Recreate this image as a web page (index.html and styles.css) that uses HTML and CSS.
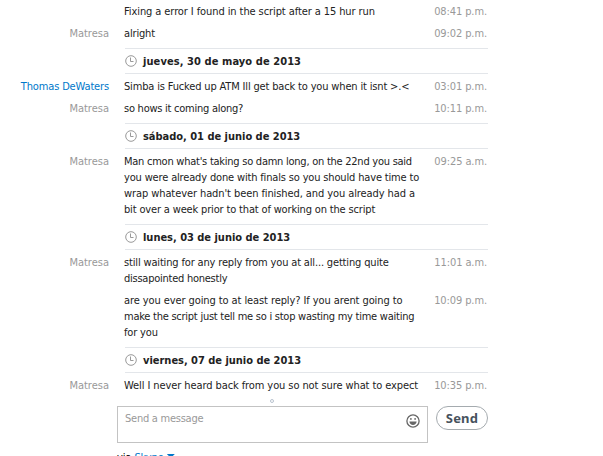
FILE: index.html
```
<!DOCTYPE html>
<html lang="es">
<head>
    <meta charset="UTF-8">
    <meta name="viewport" content="width=device-width, initial-scale=1.0">
    <title>Chat</title>
    <link rel="stylesheet" href="styles.css">
</head>
<body>
    <!-- clock icon used by every date row -->
    <svg class="sprite">
        <symbol id="clock" viewBox="0 0 12 12">
            <circle cx="6" cy="6" r="5.3"/>
            <path d="M5.5 2.5V6.5H8.5"/>
        </symbol>
    </svg>

    <div class="chat">
        <div class="messages">
            <div class="row">
                <div class="name"></div>
                <div class="text loose">Fixing a error I found in the script after a 15 hur run</div>
                <div class="time">08:41 p.m.</div>
            </div>
            <div class="row">
                <div class="name">Matresa</div>
                <div class="text">alright</div>
                <div class="time">09:02 p.m.</div>
            </div>
            <div class="date wide"><svg class="clock"><use href="#clock"/></svg><span>jueves, 30 de mayo de 2013</span></div>
            <div class="row">
                <div class="name other">Thomas DeWaters</div>
                <div class="text">Simba is Fucked up ATM Ill get back to you when it isnt &gt;.&lt;</div>
                <div class="time">03:01 p.m.</div>
            </div>
            <div class="row">
                <div class="name">Matresa</div>
                <div class="text tight">so hows it coming along?</div>
                <div class="time">10:11 p.m.</div>
            </div>
            <div class="date"><svg class="clock"><use href="#clock"/></svg><span>sábado, 01 de junio de 2013</span></div>
            <div class="row">
                <div class="name">Matresa</div>
                <div class="text"><span class="tight">Man cmon what's taking so damn long, on the 22nd you said</span><br>you were already done with finals so you should have time to<br><span class="loose">wrap whatever hadn't been finished, and you already had a</span><br>bit over a week prior to that of working on the script</div>
                <div class="time">09:25 a.m.</div>
            </div>
            <div class="date"><svg class="clock"><use href="#clock"/></svg><span>lunes, 03 de junio de 2013</span></div>
            <div class="row">
                <div class="name">Matresa</div>
                <div class="text">still waiting for any reply from you at all... getting quite<br><span class="tight">dissapointed honestly</span></div>
                <div class="time">11:01 a.m.</div>
            </div>
            <div class="row">
                <div class="name"></div>
                <div class="text"><span class="loose">are you ever going to at least reply? If you arent going to</span><br><span class="tight">make the script just tell me so i stop wasting my time waiting</span><br>for you</div>
                <div class="time">10:09 p.m.</div>
            </div>
            <div class="date"><svg class="clock"><use href="#clock"/></svg><span>viernes, 07 de junio de 2013</span></div>
            <div class="row">
                <div class="name">Matresa</div>
                <div class="text loose">Well I never heard back from you so not sure what to expect</div>
                <div class="time">10:35 p.m.</div>
            </div>
        </div>

        <div class="handle"></div>

        <div class="composer">
            <div class="box">
                <span>Send a message</span>
                <svg class="smile" viewBox="0 0 14 14">
                    <circle class="face" cx="7" cy="7" r="6.1"/>
                    <circle cx="4.9" cy="4.9" r="0.9"/>
                    <circle cx="9.1" cy="4.9" r="0.9"/>
                    <path d="M3.4 7.6H10.6C10.4 9.8 9 11 7 11S3.6 9.8 3.4 7.6Z"/>
                </svg>
            </div>
            <button class="send">Send</button>
        </div>

        <div class="via">via <a>Skype <i class="arrow"></i></a></div>
    </div>
</body>
</html>
```
FILE: styles.css
```
*{
    margin: 0;
    padding: 0;
    box-sizing: border-box;
}
body{
    font-family: "DejaVu Sans Condensed", "DejaVu Sans", sans-serif;
    font-stretch: condensed;
    font-size: 11px;
    line-height: 16px;
    color: #222;
    background: #fff;
    overflow: hidden;
}
.sprite{
    display: none;
}
.chat{
    width: 488px;
    height: 456px;
    overflow: hidden;
}
.row{
    display: flex;
    padding: 4px 0 2px;
    white-space: nowrap;
}
.name{
    width: 109px;
    text-align: right;
    color: #999;
}
.other{
    color: #0078ca;
    letter-spacing: -0.15px;
}
.text{
    flex: 1;
    padding-left: 15px;
    letter-spacing: -0.16px;
}
.loose{
    letter-spacing: -0.09px;
}
.tight{
    letter-spacing: -0.25px;
}
.time{
    color: #999;
    padding-right: 1px;
    letter-spacing: -0.1px;
}
.date{
    display: flex;
    align-items: center;
    height: 26px;
    margin: 4px 0 1px 125px;
    border-top: 1px solid #e3e6ea;
    border-bottom: 1px solid #e3e6ea;
    font-weight: bold;
    letter-spacing: -0.02px;
}
.date span{
    padding-top: 1px;
}
.wide{
    letter-spacing: 0.08px;
}
.clock{
    width: 12px;
    height: 12px;
    margin-right: 6px;
    fill: none;
    stroke: #999;
}
.handle{
    width: 4px;
    height: 4px;
    margin: 3px 0 3px 270px;
    border: 1px solid #b9c3cf;
    border-radius: 50%;
}
.composer{
    display: flex;
    align-items: flex-start;
    gap: 8px;
    margin-left: 117px;
}
.box{
    display: flex;
    justify-content: space-between;
    width: 311px;
    height: 37px;
    padding: 4px 7px;
    border: 1px solid #c3c3c3;
    color: #999;
    letter-spacing: -0.25px;
}
.smile{
    width: 14px;
    height: 14px;
    margin-top: 3px;
    fill: #666;
}
.face{
    fill: none;
    stroke: #666;
    stroke-width: 1.3;
}
.send{
    width: 52px;
    height: 24px;
    border: 1px solid #a5abaf;
    border-radius: 12px;
    background: #fff;
    color: #47525d;
    font: bold 13px "Noto Sans", sans-serif;
    letter-spacing: 0.2px;
}
.via{
    padding: 7px 0 0 117px;
    color: #000;
    letter-spacing: -0.1px;
}
.via a{
    color: #0078ca;
}
.arrow{
    display: inline-block;
    width: 8px;
    height: 4px;
    margin-bottom: 4px;
    vertical-align: middle;
    background: #0078ca;
    clip-path: polygon(0 0, 100% 0, 50% 100%);
}
```
